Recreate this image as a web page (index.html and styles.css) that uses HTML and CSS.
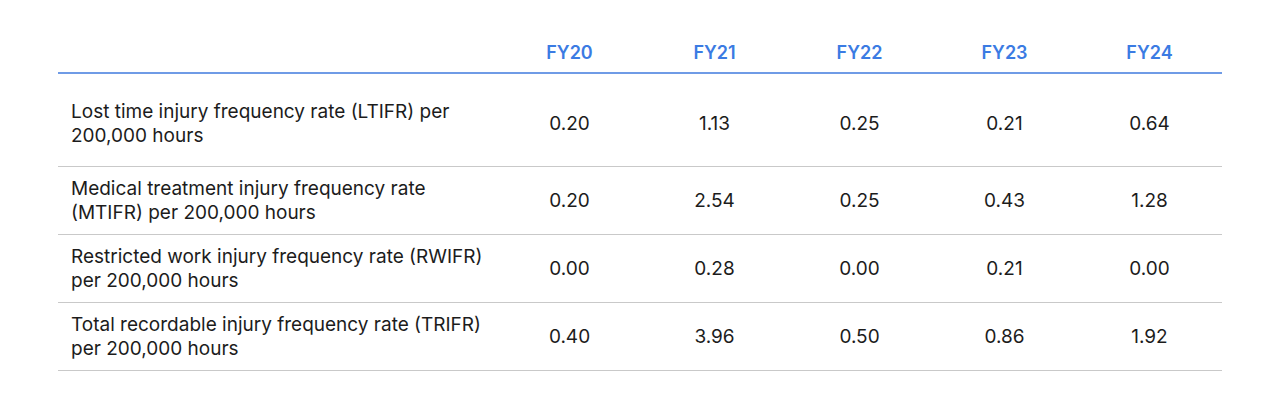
FILE: index.html
```html
<!DOCTYPE html>
<html lang="en">
<head>
<meta charset="utf-8">
<title>Injury frequency rates</title>
<link rel="stylesheet" href="styles.css">
</head>
<body>
<table class="data">
  <colgroup>
    <col class="c-label">
    <col class="c-val"><col class="c-val"><col class="c-val"><col class="c-val"><col class="c-val">
  </colgroup>
  <thead>
    <tr>
      <th></th>
      <th>FY20</th><th>FY21</th><th>FY22</th><th>FY23</th><th>FY24</th>
    </tr>
  </thead>
  <tbody>
    <tr class="first">
      <td class="label">Lost time injury frequency rate (LTIFR) per<br>200,000 hours</td>
      <td>0.20</td><td>1.13</td><td>0.25</td><td>0.21</td><td>0.64</td>
    </tr>
    <tr>
      <td class="label">Medical treatment injury frequency rate<br>(MTIFR) per 200,000 hours</td>
      <td>0.20</td><td>2.54</td><td>0.25</td><td>0.43</td><td>1.28</td>
    </tr>
    <tr>
      <td class="label">Restricted work injury frequency rate (RWIFR)<br>per 200,000 hours</td>
      <td>0.00</td><td>0.28</td><td>0.00</td><td>0.21</td><td>0.00</td>
    </tr>
    <tr>
      <td class="label">Total recordable injury frequency rate (TRIFR)<br>per 200,000 hours</td>
      <td>0.40</td><td>3.96</td><td>0.50</td><td>0.86</td><td>1.92</td>
    </tr>
  </tbody>
</table>
</body>
</html>
```
FILE: styles.css
```css
html, body {
  margin: 0;
  padding: 0;
  background: #ffffff;
}
body {
  font-family: "Inter", "Noto Sans", sans-serif;
  color: #1c1c1c;
  font-size: 19px;
  line-height: 24px;
}
.data {
  margin: 41px 0 0 58px;
  width: 1164px;
  border-collapse: collapse;
  table-layout: fixed;
}
.c-label { width: 439px; }
.c-val { width: 145px; }
.data th {
  color: #3b7be3;
  font-size: 18px;
  font-weight: 600;
  text-align: center;
  padding: 0 0 7px;
  border-bottom: 2px solid #6f9be6;
}
.data td {
  text-align: center;
  vertical-align: middle;
  padding: 10px 0 9px;
  border-bottom: 1px solid #c9c9c9;
}
.data tr.first td {
  padding-top: 26px;
  padding-bottom: 18px;
}
.data td.label {
  text-align: left;
  padding-left: 13px;
}
```
